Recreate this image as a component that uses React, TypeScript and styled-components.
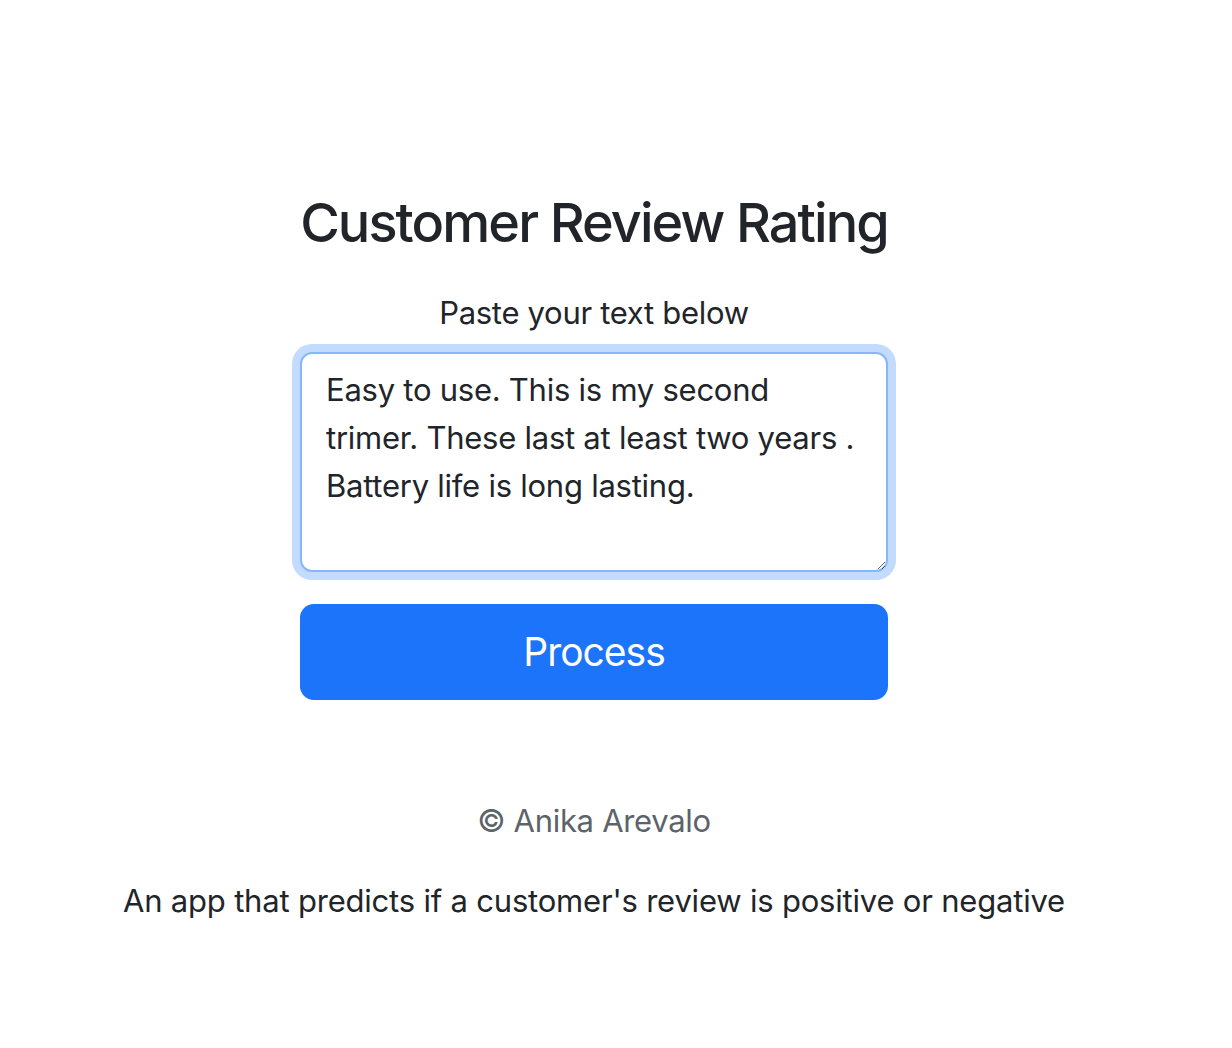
import React from "react";
import styled, { createGlobalStyle } from "styled-components";

const Global = createGlobalStyle`
  html, body {
    margin: 0;
    padding: 0;
    background: #ffffff;
  }
  body {
    font-family: Inter, "Noto Sans", "Liberation Sans", sans-serif;
    color: #212529;
    font-size: 31px;
    line-height: 1.5;
  }
  * { box-sizing: border-box; }
`;

const Page = styled.main`
  width: 1188px;
  min-height: 1048px;
  display: flex;
  flex-direction: column;
  align-items: center;
  padding-top: 189px;
`;

const Title = styled.h1`
  margin: 0;
  height: 67px;
  font-size: 54px;
  font-weight: 500;
  line-height: 67px;
  letter-spacing: -1.9px;
  text-align: center;
`;

const Form = styled.form`
  width: 588px;
  margin-top: 33px;
  display: flex;
  flex-direction: column;
  align-items: stretch;
`;

const Label = styled.label`
  display: block;
  text-align: center;
  font-size: 31px;
  line-height: 48px;
  letter-spacing: -0.3px;
  margin-bottom: 15px;
`;

const TextArea = styled.textarea`
  display: block;
  width: 100%;
  height: 220px;
  padding: 12px 12px 12px 24px;
  font-family: inherit;
  font-size: 31px;
  line-height: 48px;
  letter-spacing: -0.25px;
  color: #212529;
  background: #fff;
  border: 2px solid #86b7fe;
  border-radius: 12px;
  box-shadow: 0 0 0 8px rgba(13, 110, 253, 0.25);
  outline: none;
  resize: vertical;
  overflow: hidden;
`;

const Button = styled.button`
  margin-top: 32px;
  height: 96px;
  width: 100%;
  border: none;
  border-radius: 14px;
  background: #1c74fb;
  color: #ffffff;
  font-family: inherit;
  font-size: 39px;
  line-height: 60px;
  letter-spacing: -1px;
  font-weight: 400;
  cursor: pointer;
`;

const Footer = styled.footer`
  margin-top: 97px;
  display: flex;
  flex-direction: column;
  align-items: center;
  gap: 32px;
`;

const Copyright = styled.p`
  margin: 0;
  color: #5c636a;
  font-size: 31px;
  line-height: 48px;
  letter-spacing: -0.3px;
`;

const About = styled.p`
  margin: 0;
  color: #212529;
  font-size: 31px;
  line-height: 48px;
  letter-spacing: -0.2px;
`;

const review =
  "Easy to use. This is my second\ntrimer. These last at least two years .\nBattery life is long lasting.";

export default function App() {
  return (
    <>
      <Global />
      <Page>
        <Title>Customer Review Rating</Title>
        <Form onSubmit={(e) => e.preventDefault()}>
          <Label htmlFor="review">Paste your text below</Label>
          <TextArea id="review" defaultValue={review} spellCheck={false} />
          <Button type="submit">Process</Button>
        </Form>
        <Footer>
          <Copyright>© Anika Arevalo</Copyright>
          <About>An app that predicts if a customer's review is positive or negative</About>
        </Footer>
      </Page>
    </>
  );
}
